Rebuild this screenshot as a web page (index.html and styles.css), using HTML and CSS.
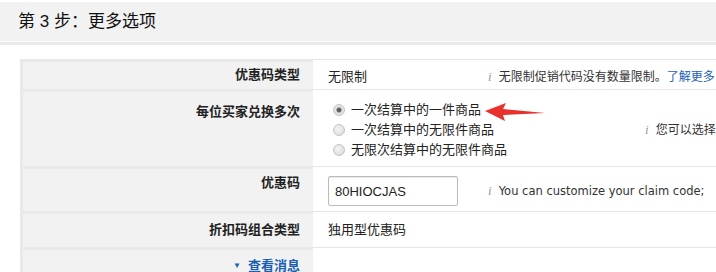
FILE: index.html
```html
<!DOCTYPE html>
<html lang="zh-CN">
<head>
    <meta charset="UTF-8">
    <title>第 3 步：更多选项</title>
    <link rel="stylesheet" href="styles.css">
</head>
<body>
    <div class="stepHeader">
        <h2>第 3 步：更多选项</h2>
    </div>

    <table class="optionsTable">
        <colgroup>
            <col class="labelCol">
            <col class="valueCol">
        </colgroup>
        <tr class="row-type">
            <th>优惠码类型</th>
            <td>
                <div class="cell">
                    <div class="value short">无限制</div>
                    <div class="help"><span class="info">i</span>无限制促销代码没有数量限制。<a href="#">了解更多</a></div>
                </div>
            </td>
        </tr>
        <tr class="row-redeem">
            <th>每位买家兑换多次</th>
            <td>
                <div class="cell">
                    <div class="value long">
                        <label class="radio"><input type="radio" name="redeem" checked>一次结算中的一件商品</label>
                        <label class="radio"><input type="radio" name="redeem">一次结算中的无限件商品</label>
                        <label class="radio"><input type="radio" name="redeem">无限次结算中的无限件商品</label>
                    </div>
                    <div class="help"><span class="info">i</span>您可以选择</div>
                    <svg class="arrow" width="62" height="22" viewBox="0 0 62 22">
                        <path d="M0 10 L21 2 L18 8 L60 12 L18 14 L20 20 Z" fill="#e8302c"/>
                    </svg>
                </div>
            </td>
        </tr>
        <tr class="row-code">
            <th>优惠码</th>
            <td>
                <div class="cell">
                    <div class="value short"><input class="codeInput" type="text" value="80HIOCJAS"></div>
                    <div class="help latin"><span class="info">i</span>You can customize your claim code;</div>
                </div>
            </td>
        </tr>
        <tr class="row-combo">
            <th>折扣码组合类型</th>
            <td><div class="cell"><div class="value">独用型优惠码</div></div></td>
        </tr>
        <tr class="row-more">
            <th><a href="#" class="toggle"><span class="caret">&#9660;</span>查看消息</a></th>
            <td></td>
        </tr>
    </table>
</body>
</html>
```

FILE: styles.css
```css
body {
    margin: 0;
    font-family: "Liberation Sans", "Noto Sans CJK SC", sans-serif;
    font-size: 13px;
    color: #222;
    background: #fff;
    overflow: hidden;
    width: 716px;
    height: 272px;
}

/* Step header band */
.stepHeader {
    margin-top: 2px;
    background: #f2f2f2;
    border-bottom: 1px solid #fafafa;
    box-shadow: 0 3px 0 #ebebeb;
    height: 39px;
}

.stepHeader h2 {
    margin: 0;
    padding-left: 18px;
    font-weight: normal;
    font-size: 17px;
    line-height: 40px;
    color: #111;
}

/* Options table */
.optionsTable {
    margin: 17px 0 0 20px;
    width: 860px;
    table-layout: fixed;
    border-collapse: separate;
    border-spacing: 0;
    border-left: 3px solid #e9e9e9;
}

.labelCol { width: 290px; }
.valueCol { width: 570px; }

.optionsTable th {
    background: #f2f2f2;
    text-align: right;
    font-weight: bold;
    line-height: 16px;
    padding: 8px 13px 0 0;
    vertical-align: top;
    color: #222;
    border-top: 3px solid #e9e9e9;
}

.optionsTable td {
    padding: 0 0 0 15px;
    line-height: 16px;
    vertical-align: top;
    border-top: 1px solid #e6e6e6;
    white-space: nowrap;
}

.cell {
    display: flex;
    align-items: center;
    position: relative;
}

.value.short { width: 160px; flex: none; }
.value.long { width: 317px; flex: none; }

.row-type { height: 30px; }
.row-type th { padding-top: 5px; }
.row-type td { padding-top: 9px; }

.row-redeem { height: 77px; }
.row-redeem th { padding-top: 12px; }
.row-redeem td { padding-top: 10px; }

.radio {
    display: flex;
    align-items: center;
    height: 20px;
    padding-left: 5px;
}

/* Old-style grey radio buttons */
.radio input {
    appearance: none;
    margin: 0 6px 0 0;
    width: 12px;
    height: 12px;
    border-radius: 50%;
    border: 1px solid #c4c4c4;
    background: radial-gradient(circle at 40% 40%, #f4f4f4, #d8d8d8);
    box-sizing: border-box;
}

.radio input:checked {
    background: radial-gradient(circle, #555 0, #666 2px, #e0e0e0 3px, #eaeaea);
}

.row-code { height: 45px; }
.row-code th { padding-top: 6px; }
.row-code td { padding-top: 9px; }

.codeInput {
    width: 130px;
    height: 30px;
    box-sizing: border-box;
    padding: 0 6px;
    border: 1px solid #bbb;
    border-radius: 2px;
    font-family: "Liberation Sans", sans-serif;
    font-size: 13px;
    color: #222;
    box-shadow: inset 0 1px 1px #e8e8e8;
}

.row-combo { height: 36px; }
.row-combo th { padding-top: 8px; }
.row-combo td { padding-top: 10px; }

.row-more { height: 30px; }
.row-more th { padding-top: 8px; }

.help {
    white-space: nowrap;
    color: #333;
    font-size: 12px;
}

.help.latin {
    font-family: "DejaVu Sans", sans-serif;
    font-size: 11.5px;
}

.info {
    font-family: "Liberation Serif", serif;
    font-style: italic;
    color: #999;
    font-size: 13px;
    margin-right: 7px;
}

.help a,
.toggle {
    color: #1a5fb4;
    text-decoration: none;
}

.toggle {
    font-weight: bold;
}

.caret {
    font-size: 8px;
    margin-right: 7px;
    vertical-align: 2px;
}

/* Annotation arrow over the first option */
.arrow {
    position: absolute;
    left: 157px;
    top: 1px;
}
```
